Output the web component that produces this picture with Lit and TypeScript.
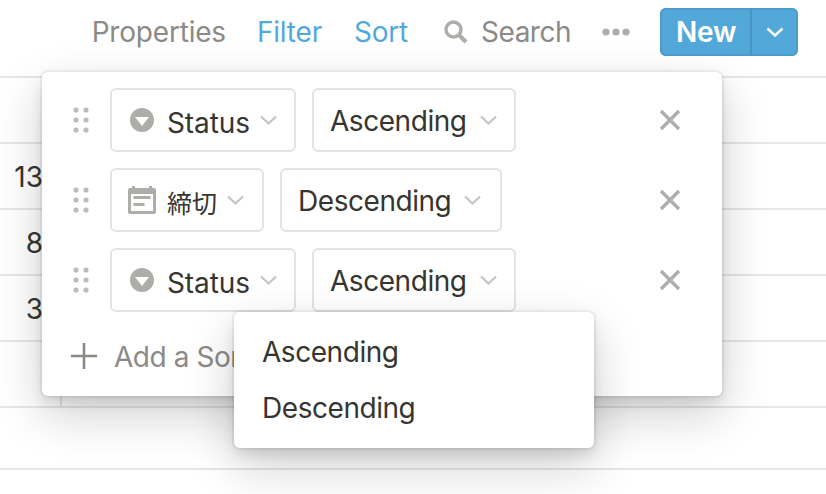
import { LitElement, html, css, svg } from "lit";
import { customElement } from "lit/decorators.js";

const chevron = svg`<svg class="chev" viewBox="0 0 17 10" width="17" height="10"><path d="M1 1.5 L8.5 8.5 L16 1.5" fill="none" stroke="#c6c5c3" stroke-width="2.2"/></svg>`;
const statusIcon = svg`<svg class="ic" viewBox="0 0 24 24" width="24" height="24"><circle cx="12" cy="12" r="12" fill="#aeadaa"/><path d="M5 9 H19 L12 18 Z" fill="#fff"/></svg>`;
const dateIcon = svg`<svg class="ic2" viewBox="0 0 28 28" width="28" height="28"><path fill="#aeadaa" d="M4 0h3v2h14V0h3v2h2a2 2 0 0 1 2 2v22a2 2 0 0 1-2 2H2a2 2 0 0 1-2-2V4a2 2 0 0 1 2-2h2z"/><rect x="3" y="8" width="22" height="17" fill="#fff"/><rect x="5.5" y="10" width="17" height="3" fill="#aeadaa"/><rect x="5.5" y="17" width="11" height="3" fill="#aeadaa"/></svg>`;
const drag = svg`<svg viewBox="0 0 16 28" width="16" height="28"><g fill="#bdbcba"><circle cx="3" cy="4" r="2.6"/><circle cx="13" cy="4" r="2.6"/><circle cx="3" cy="14" r="2.6"/><circle cx="13" cy="14" r="2.6"/><circle cx="3" cy="24" r="2.6"/><circle cx="13" cy="24" r="2.6"/></g></svg>`;
const cross = svg`<svg viewBox="0 0 22 22" width="22" height="22"><path d="M2 2 L20 20 M20 2 L2 20" stroke="#aeadaa" stroke-width="3.2" fill="none"/></svg>`;

@customElement("app-root")
export class AppRoot extends LitElement {
  static styles = css`
    :host {
      display: block;
      position: relative;
      width: 826px;
      height: 494px;
      overflow: hidden;
      background: #fff;
      font-family: Inter, "Noto Sans CJK JP", sans-serif;
      font-size: 28px;
      color: #37352f;
    }
    .toolbar {
      height: 76px;
      display: flex;
      align-items: flex-start;
      justify-content: flex-end;
      padding: 8px 28px 0 0;
      box-sizing: border-box;
      letter-spacing: -0.2px;
    }
    .tool {
      line-height: 48px;
      color: #8b8a86;
      white-space: nowrap;
    }
    .blue { color: #53a8da; }
    .props { margin-right: 31px; }
    .filter { margin-right: 32px; }
    .sort { margin-right: 36px; }
    .search { display: flex; align-items: center; gap: 13px; margin-right: 31px; letter-spacing: -0.5px; }
    .dots { height: 48px; display: flex; align-items: center; margin-right: 30px; }
    .new {
      display: flex;
      width: 138px;
      height: 48px;
      box-sizing: border-box;
      border-radius: 6px;
      background: #53a8da;
      color: #fff;
      box-shadow: inset 0 0 0 2px #4c9bc9;
      font-weight: 600;
    }
    .new-l { width: 92px; box-sizing: border-box; padding-left: 16px; line-height: 48px; border-right: 2px solid #4895c3; }
    .new-r { flex: 1; display: flex; align-items: center; justify-content: center; }
    .row {
      height: 66px;
      box-sizing: border-box;
      border-top: 2px solid #e7e7e6;
      display: flex;
    }
    .row.last { height: 62px; }
    .row.end { height: 26px; }
    .cell {
      width: 62px;
      box-sizing: border-box;
      text-align: right;
      padding: 13px 17px 0 0;
      line-height: 40px;
      border-right: 2px solid #e7e7e6;
      white-space: nowrap;
    }
    .panel {
      position: absolute;
      left: 42px;
      top: 72px;
      width: 680px;
      height: 324px;
      box-sizing: border-box;
      padding: 16px 0 0 31px;
      background: #fff;
      border-radius: 6px;
      box-shadow: rgba(15,15,15,.05) 0 0 0 2px, rgba(15,15,15,.1) 0 6px 12px, rgba(15,15,15,.2) 0 18px 48px;
      display: flex;
      flex-direction: column;
      gap: 16px;
      letter-spacing: -0.45px;
    }
    .srow { display: flex; align-items: center; height: 64px; position: relative; }
    .grip { display: flex; width: 16px; height: 28px; margin-right: 21px; }
    .sel {
      height: 64px;
      box-sizing: border-box;
      border: 2px solid #e3e3e2;
      border-radius: 6px;
      display: flex;
      align-items: center;
      margin-right: 16px;
      white-space: nowrap;
    }
    .prop { padding-left: 18px; }
    .prop .ic { margin-right: 13px; }
    .prop.date { padding-left: 16px; }
    .prop.date .ic2 { margin-right: 11px; flex: none; }
    .prop span { padding-top: 5px; letter-spacing: -0.1px; }
    .prop.date span { font-size: 25px; letter-spacing: 0; padding-top: 4px; }
    .prop .chev { margin: 0 0 0 10px; }
    .w186 { width: 186px; }
    .w154 { width: 154px; }
    .ord { padding: 1px 0 0 16px; }
    .ord .chev { margin: -1px 0 0 13px; }
    .w204 { width: 204px; }
    .w222 { width: 222px; }
    .x { display: flex; position: absolute; left: 586px; top: 21px; }
    .add {
      display: flex;
      align-items: center;
      height: 40px;
      margin-top: 9px;
      color: #8b8a86;
      white-space: nowrap;
    }
    .add svg { margin: -2px 17px 0 -2px; }
    .menu {
      position: absolute;
      left: 234px;
      top: 312px;
      width: 360px;
      height: 136px;
      box-sizing: border-box;
      padding: 12px 28px;
      background: #fff;
      border-radius: 6px;
      box-shadow: rgba(15,15,15,.05) 0 0 0 2px, rgba(15,15,15,.1) 0 6px 12px, rgba(15,15,15,.2) 0 18px 48px;
      letter-spacing: -0.45px;
    }
    .menu div { height: 56px; line-height: 56px; }
  `;

  private propSel(icon: unknown, label: string, cls: string) {
    return html`<div class="sel prop ${cls}">${icon}<span>${label}</span>${chevron}</div>`;
  }
  private ordSel(label: string, cls: string) {
    return html`<div class="sel ord ${cls}">${label}${chevron}</div>`;
  }

  render() {
    return html`
      <div class="toolbar">
        <div class="tool props">Properties</div>
        <div class="tool blue filter">Filter</div>
        <div class="tool blue sort">Sort</div>
        <div class="tool search">
          <svg viewBox="0 0 24 24" width="24" height="24"><circle cx="9.5" cy="9.5" r="7.5" fill="none" stroke="#aeadaa" stroke-width="3.4"/><path d="M15 15 L22 22" stroke="#aeadaa" stroke-width="4.2"/></svg>
          Search
        </div>
        <div class="dots">
          <svg viewBox="0 0 28 8" width="28" height="8"><g fill="#aeadaa"><circle cx="4" cy="4" r="3.6"/><circle cx="14" cy="4" r="3.6"/><circle cx="24" cy="4" r="3.6"/></g></svg>
        </div>
        <div class="new">
          <div class="new-l">New</div>
          <div class="new-r"><svg viewBox="0 0 18 10" width="18" height="10"><path d="M1.5 1.5 L9 8.5 L16.5 1.5" fill="none" stroke="#fff" stroke-width="2.4"/></svg></div>
        </div>
      </div>
      <div class="row"><div class="cell"></div></div>
      <div class="row"><div class="cell">13</div></div>
      <div class="row"><div class="cell">8</div></div>
      <div class="row"><div class="cell">3</div></div>
      <div class="row"><div class="cell"></div></div>
      <div class="row last"></div>
      <div class="row end"></div>

      <div class="panel">
        <div class="srow">
          <div class="grip">${drag}</div>
          ${this.propSel(statusIcon, "Status", "w186")}
          ${this.ordSel("Ascending", "w204")}
          <div class="x">${cross}</div>
        </div>
        <div class="srow">
          <div class="grip">${drag}</div>
          ${this.propSel(dateIcon, "締切", "date w154")}
          ${this.ordSel("Descending", "w222")}
          <div class="x">${cross}</div>
        </div>
        <div class="srow">
          <div class="grip">${drag}</div>
          ${this.propSel(statusIcon, "Status", "w186")}
          ${this.ordSel("Ascending", "w204")}
          <div class="x">${cross}</div>
        </div>
        <div class="add">
          <svg viewBox="0 0 26 26" width="26" height="26"><path d="M13 0 V26 M0 13 H26" stroke="#8b8a86" stroke-width="2.6"/></svg>
          Add a Sort
        </div>
      </div>

      <div class="menu">
        <div>Ascending</div>
        <div>Descending</div>
      </div>
    `;
  }
}
